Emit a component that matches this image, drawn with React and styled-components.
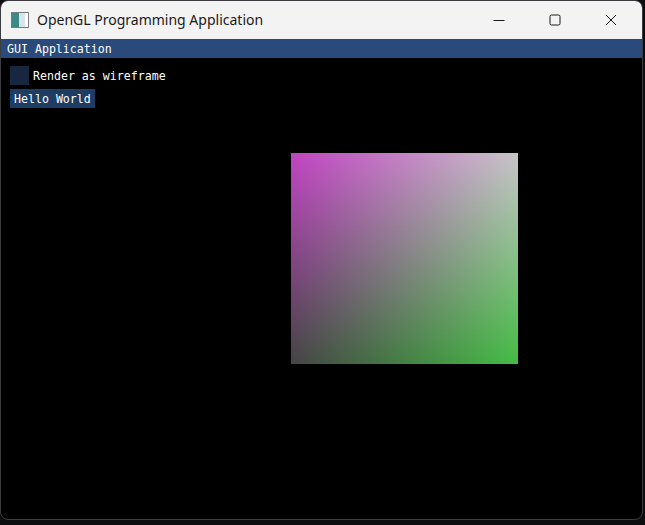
import styled, { createGlobalStyle } from "styled-components";

const GlobalStyle = createGlobalStyle`
  html, body {
    margin: 0;
    padding: 0;
    background: #0d0d0f;
  }
`;

const Window = styled.div`
  width: 641px;
  height: 518px;
  border: 1px solid #3c3c40;
  border-radius: 8px;
  overflow: hidden;
  display: flex;
  flex-direction: column;
  background: #000;
`;

const TitleBar = styled.div`
  height: 38px;
  flex: none;
  display: flex;
  align-items: center;
  padding-right: 3px;
  background: #f3f3f3;
  font-family: "Noto Sans", "Open Sans", sans-serif;
  font-size: 14px;
  color: #1a1a1a;
`;

const AppIcon = styled.div`
  width: 16px;
  height: 14px;
  margin: 0 8px 0 10px;
  border: 1px solid #7a7a7a;
  background: linear-gradient(90deg, #3a8a86 0 45%, #d8e4ee 45% 80%, #ffffff 80%);
`;

const Title = styled.span`
  flex: 1;
  margin-top: -1px;
`;

const Control = styled.div`
  width: 56px;
  height: 38px;
  display: flex;
  align-items: center;
  justify-content: center;
`;

const Viewport = styled.div`
  flex: 1;
  position: relative;
  font-family: "DejaVu Sans Mono", "Liberation Mono", monospace;
  font-size: 11.6px;
  color: #ffffff;
`;

const GuiHeader = styled.div`
  height: 19px;
  background: #294a7a;
  display: flex;
  align-items: center;
  padding-left: 6px;
`;

const GuiBody = styled.div`
  padding: 8px 9px;
  display: flex;
  flex-direction: column;
  align-items: flex-start;
  gap: 4px;
`;

const CheckRow = styled.div`
  display: flex;
  align-items: center;
  gap: 4px;
`;

const CheckBox = styled.div`
  width: 19px;
  height: 19px;
  background: #16273f;
`;

const Button = styled.div`
  height: 19px;
  padding: 0 4px;
  display: flex;
  align-items: center;
  background: #1d3d64;
`;

const Quad = styled.div`
  position: absolute;
  left: 290px;
  top: 114px;
  width: 227px;
  height: 211px;
  background: linear-gradient(90deg, #454545, #44bd44);

  &::before {
    content: "";
    position: absolute;
    inset: 0;
    background: linear-gradient(90deg, #c244c4, #c8c4c8);
    -webkit-mask-image: linear-gradient(180deg, #000, transparent);
    mask-image: linear-gradient(180deg, #000, transparent);
  }
`;

const App = () => {
  return (
    <>
      <GlobalStyle />
      <Window>
        <TitleBar>
          <AppIcon />
          <Title>OpenGL Programming Application</Title>
          <Control>
            <svg width="12" height="12" viewBox="0 0 12 12">
              <path d="M0.5 6.5h11" stroke="#1a1a1a" strokeWidth="1" />
            </svg>
          </Control>
          <Control>
            <svg width="12" height="12" viewBox="0 0 12 12">
              <rect x="1" y="1" width="10" height="10" rx="1.5" fill="none" stroke="#1a1a1a" strokeWidth="1" />
            </svg>
          </Control>
          <Control>
            <svg width="12" height="12" viewBox="0 0 12 12">
              <path d="M1 1L11 11M11 1L1 11" stroke="#1a1a1a" strokeWidth="1" />
            </svg>
          </Control>
        </TitleBar>
        <Viewport>
          <GuiHeader>GUI Application</GuiHeader>
          <GuiBody>
            <CheckRow>
              <CheckBox />
              <span>Render as wireframe</span>
            </CheckRow>
            <Button>Hello World</Button>
          </GuiBody>
          <Quad />
        </Viewport>
      </Window>
    </>
  );
};

export default App;
